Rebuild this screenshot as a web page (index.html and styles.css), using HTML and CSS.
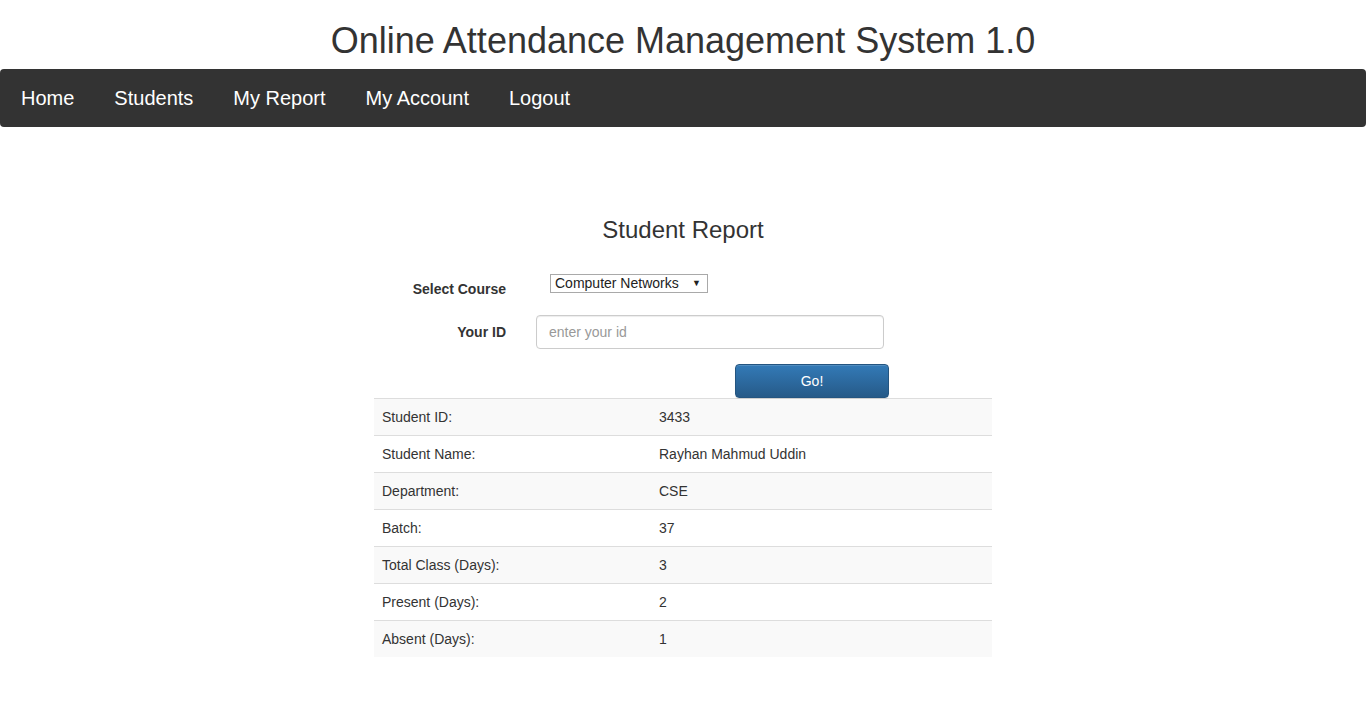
FILE: index.html
```html
<!DOCTYPE html>
<html>
<head>
<meta charset="utf-8">
<link rel="stylesheet" href="styles.css">
</head>
<body>
<header class="site-header">
  <h1 class="site-title">Online Attendance Management System 1.0</h1>
</header>
<nav class="navbar">
  <ul class="nav-list">
    <li><a href="#">Home</a></li>
    <li><a href="#">Students</a></li>
    <li><a href="#">My Report</a></li>
    <li><a href="#">My Account</a></li>
    <li><a href="#">Logout</a></li>
  </ul>
</nav>
<main class="report">
  <h3 class="report-title">Student Report</h3>
  <form class="report-form">
    <div class="form-row row-select">
      <label class="form-label">Select Course</label>
      <div class="form-field">
        <div class="select-box"><span>Computer Networks</span><span class="caret">▼</span></div>
      </div>
    </div>
    <div class="form-row row-id">
      <label class="form-label">Your ID</label>
      <div class="form-field">
        <input class="text-input" type="text" placeholder="enter your id">
      </div>
    </div>
    <div class="form-row row-btn">
      <button type="button" class="btn-go">Go!</button>
    </div>
  </form>
  <table class="report-table">
    <tr><td>Student ID:</td><td>3433</td></tr>
    <tr><td>Student Name:</td><td>Rayhan Mahmud Uddin</td></tr>
    <tr><td>Department:</td><td>CSE</td></tr>
    <tr><td>Batch:</td><td>37</td></tr>
    <tr><td>Total Class (Days):</td><td>3</td></tr>
    <tr><td>Present (Days):</td><td>2</td></tr>
    <tr><td>Absent (Days):</td><td>1</td></tr>
  </table>
</main>
</body>
</html>
```

FILE: styles.css
```css
* { box-sizing: border-box; }
html, body { margin: 0; padding: 0; background: #fff; }
body {
  font-family: "Liberation Sans", Arial, Helvetica, sans-serif;
  font-size: 14px;
  color: #333;
}
.site-header { height: 69px; padding-top: 21px; }
.site-title {
  margin: 0;
  text-align: center;
  font-size: 36px;
  font-weight: 400;
  line-height: 40px;
  color: #333;
}
.navbar {
  height: 58px;
  background: #333;
  border-radius: 4px;
  display: flex;
  align-items: center;
}
.nav-list {
  list-style: none;
  margin: 0;
  padding: 0 0 0 1px;
  display: flex;
}
.nav-list a {
  display: block;
  padding: 0 20px;
  color: #fff;
  text-decoration: none;
  font-size: 20px;
  line-height: 58px;
}
.report {
  width: 618px;
  margin: 0 auto;
  padding-top: 89px;
}
.report-title {
  margin: 0;
  text-align: center;
  font-size: 24px;
  font-weight: 400;
  line-height: 27px;
}
.report-form { margin-top: 31px; }
.form-row { display: flex; align-items: center; }
.form-label {
  width: 132px;
  text-align: right;
  font-weight: 700;
  font-size: 14px;
  margin-right: 30px;
}
.row-select { height: 36px; align-items: flex-start; }
.row-select .form-label { padding-top: 7px; }
.row-select .form-field { padding-left: 14px; }
.select-box {
  width: 158px;
  height: 19px;
  border: 1px solid #a9a9a9;
  background: #fff;
  display: flex;
  justify-content: space-between;
  align-items: center;
  padding: 0 6px 1px 4px;
  font-size: 14px;
  color: #222;
}
.caret { font-size: 9px; color: #222; }
.row-id { margin-top: 5px; height: 34px; }
.text-input {
  width: 348px;
  height: 34px;
  border: 1px solid #ccc;
  border-radius: 4px;
  padding: 6px 12px;
  font-family: inherit;
  font-size: 14px;
  color: #555;
  box-shadow: inset 0 1px 1px rgba(0,0,0,.075);
}
.text-input::placeholder { color: #999; }
.row-btn { margin-top: 15px; padding-left: 361px; }
.btn-go {
  width: 154px;
  height: 34px;
  border: 1px solid #245580;
  border-radius: 4px;
  background: linear-gradient(to bottom, #337ab7 0, #265a88 100%);
  color: #fff;
  font-family: inherit;
  font-size: 14px;
  box-shadow: inset 0 1px 0 rgba(255,255,255,.15), 0 1px 1px rgba(0,0,0,.075);
}
.report-table {
  width: 618px;
  border-collapse: collapse;
  border-spacing: 0;
}
.report-table td {
  padding: 8px;
  line-height: 20px;
  border-top: 1px solid #ddd;
  font-size: 14px;
  color: #333;
}
.report-table td:first-child { width: 277px; }
.report-table tr:nth-child(odd) td { background: #f9f9f9; }
```
